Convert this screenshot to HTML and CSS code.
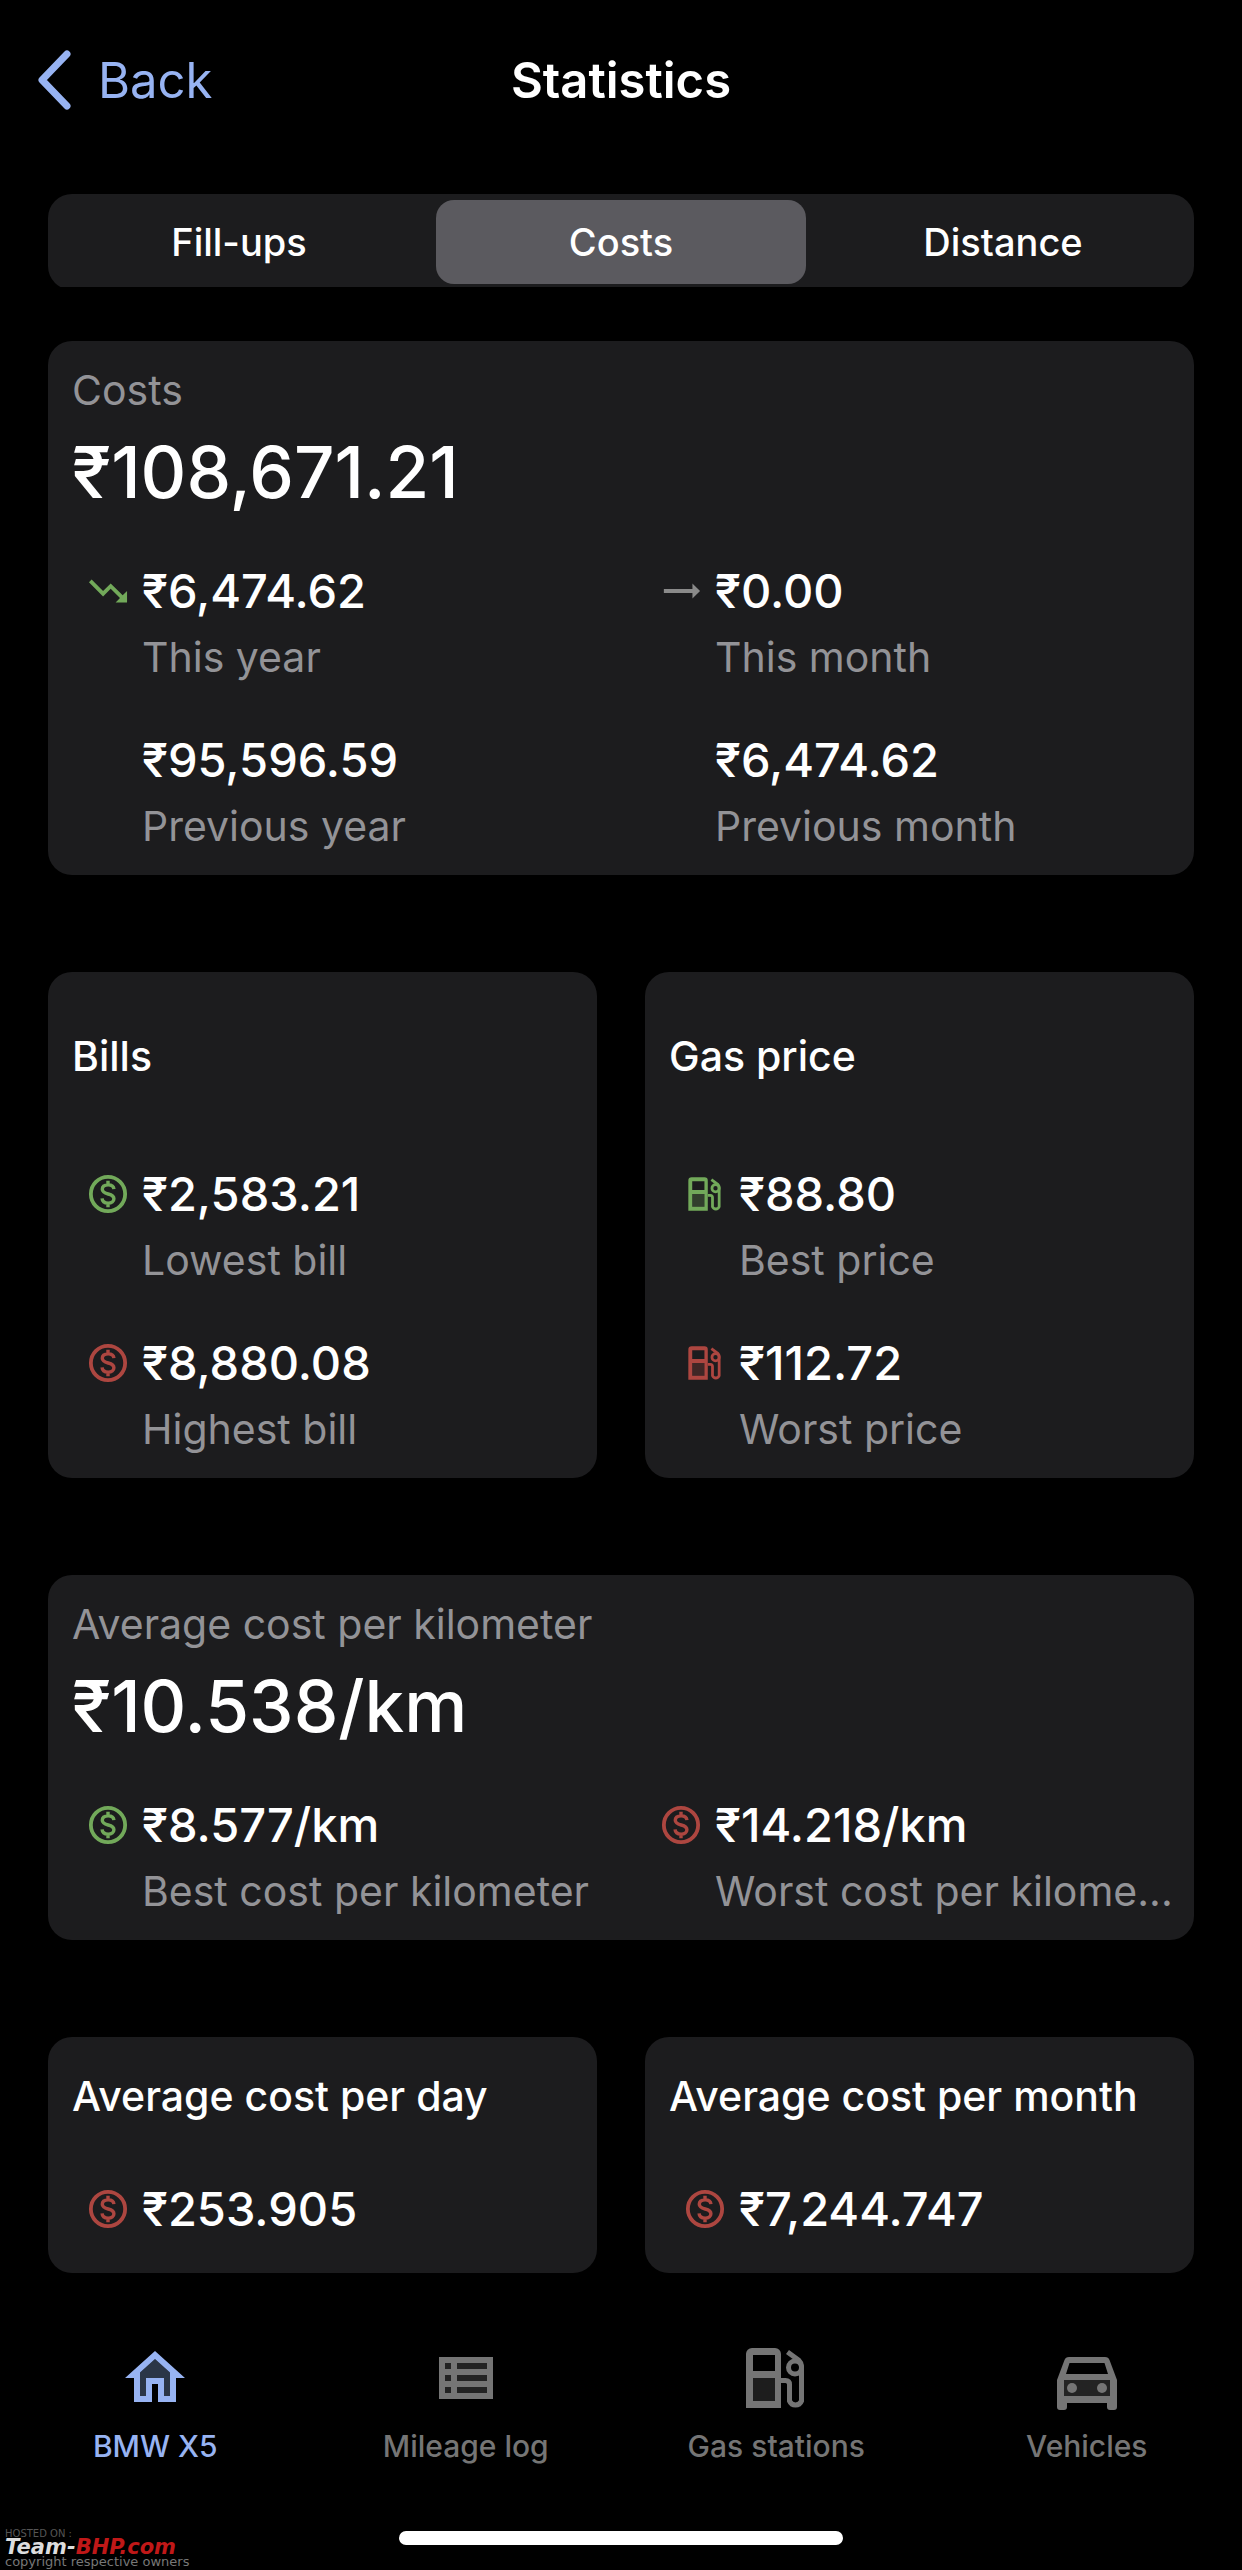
FILE: index.html
```html
<!DOCTYPE html>
<html lang="en">
<head>
    <meta charset="utf-8">
    <meta name="viewport" content="width=device-width, initial-scale=1">
    <title>Statistics</title>
    <link rel="stylesheet" href="styles.css">
</head>
<body>
    <!-- shared icons -->
    <svg class="sprite" aria-hidden="true">
        <symbol id="icon-coin" viewBox="1.5 1.5 21 21">
            <circle cx="12" cy="12" r="9" fill="none" stroke="currentColor" stroke-width="2"/>
            <path d="M15.1 9.5c-.1-1.4-1.2-2.3-3-2.3-1.9 0-3.1.9-3.1 2.3 0 1.5 1.200 2 3.100 2.500 2 .5 3 1.100 3 2.500s-1.200 2.300-3 2.300c-1.900 0-3.100-.9-3.200-2.500M12 5v2.200M12 16.800V19" fill="none" stroke="currentColor" stroke-width="1.800"/>
        </symbol>
        <symbol id="icon-pump" viewBox="0 0 72 72">
            <path d="M13 36h22v23H13z" fill="currentColor" class="tank"/>
            <path fill="currentColor" fill-rule="evenodd" d="M12 6h23a6 6 0 0 1 6 6v54H6V12a6 6 0 0 1 6-6zM13 13v16h22V13zM13 36v23h22V36z"/>
            <path d="M41 38.5h4.5q4 0 4 4V59a6.500 6.500 0 0 0 12 0V24q0-3-2.500-5.500L47.500 10" fill="none" stroke="currentColor" stroke-width="5"/>
            <circle cx="55" cy="25.5" r="6.5" fill="none" stroke="currentColor" stroke-width="5"/>
        </symbol>
        <symbol id="icon-down" viewBox="1.5 1.5 21 21">
            <path fill="currentColor" d="M16 18l2.290-2.290-4.880-4.880-4 4L2 7.410 3.410 6l6 6 4-4 6.300 6.290L22 12v6z"/>
        </symbol>
        <symbol id="icon-flat" viewBox="1.5 1.5 21 21">
            <path fill="currentColor" d="M22 12l-4-4v3H3v2h15v3z"/>
        </symbol>
    </svg>

    <div class="screen">
        <header class="header">
            <button type="button" class="back">
                <svg class="back-icon" viewBox="0 0 36 60" aria-hidden="true"><path d="M31 4L6 30l25 26"/></svg>
                Back
            </button>
            <h1 class="title">Statistics</h1>
        </header>

        <main class="content">
            <div class="segments-clip">
                <div class="segments" role="tablist">
                    <button type="button" class="segment" role="tab" aria-selected="false">Fill-ups</button>
                    <button type="button" class="segment active" role="tab" aria-selected="true">Costs</button>
                    <button type="button" class="segment" role="tab" aria-selected="false">Distance</button>
                </div>
            </div>

            <section class="card">
                <h2 class="caption">Costs</h2>
                <p class="total">₹108,671.21</p>
                <div class="stats two-columns">
                    <div class="stat">
                        <svg class="icon green"><use href="#icon-down"/></svg>
                        <p class="value">₹6,474.62</p>
                        <p class="label">This year</p>
                    </div>
                    <div class="stat">
                        <svg class="icon grey"><use href="#icon-flat"/></svg>
                        <p class="value">₹0.00</p>
                        <p class="label">This month</p>
                    </div>
                    <div class="stat">
                        <p class="value">₹95,596.59</p>
                        <p class="label">Previous year</p>
                    </div>
                    <div class="stat">
                        <p class="value">₹6,474.62</p>
                        <p class="label">Previous month</p>
                    </div>
                </div>
            </section>

            <div class="card-row">
                <section class="card">
                    <h2 class="card-title tall">Bills</h2>
                    <div class="stats">
                        <div class="stat">
                            <svg class="icon green"><use href="#icon-coin"/></svg>
                            <p class="value">₹2,583.21</p>
                            <p class="label">Lowest bill</p>
                        </div>
                        <div class="stat">
                            <svg class="icon red"><use href="#icon-coin"/></svg>
                            <p class="value">₹8,880.08</p>
                            <p class="label">Highest bill</p>
                        </div>
                    </div>
                </section>
                <section class="card">
                    <h2 class="card-title tall">Gas price</h2>
                    <div class="stats">
                        <div class="stat">
                            <svg class="icon green"><use href="#icon-pump"/></svg>
                            <p class="value">₹88.80</p>
                            <p class="label">Best price</p>
                        </div>
                        <div class="stat">
                            <svg class="icon red"><use href="#icon-pump"/></svg>
                            <p class="value">₹112.72</p>
                            <p class="label">Worst price</p>
                        </div>
                    </div>
                </section>
            </div>

            <section class="card">
                <h2 class="caption">Average cost per kilometer</h2>
                <p class="total">₹10.538/km</p>
                <div class="stats two-columns">
                    <div class="stat">
                        <svg class="icon green"><use href="#icon-coin"/></svg>
                        <p class="value">₹8.577/km</p>
                        <p class="label">Best cost per kilometer</p>
                    </div>
                    <div class="stat">
                        <svg class="icon red"><use href="#icon-coin"/></svg>
                        <p class="value">₹14.218/km</p>
                        <p class="label">Worst cost per kilome...</p>
                    </div>
                </div>
            </section>

            <div class="card-row">
                <section class="card short">
                    <h2 class="card-title">Average cost per day</h2>
                    <div class="stat">
                        <svg class="icon red"><use href="#icon-coin"/></svg>
                        <p class="value">₹253.905</p>
                    </div>
                </section>
                <section class="card short">
                    <h2 class="card-title">Average cost per month</h2>
                    <div class="stat">
                        <svg class="icon red"><use href="#icon-coin"/></svg>
                        <p class="value">₹7,244.747</p>
                    </div>
                </section>
            </div>
        </main>

        <nav class="tabs">
            <a href="#" class="tab current">
                <svg class="tab-icon" viewBox="0 0 24 24" aria-hidden="true">
                    <path fill="#2b3647" d="M7 10.190V18h2v-6h6v6h2v-7.810l-5-4.500z"/>
                    <path fill="currentColor" fill-rule="evenodd" d="M12 3L2 12h3v8h6v-6h2v6h6v-8h3zM7 10.190l5-4.500 5 4.500V18h-2v-6H9v6H7z"/>
                </svg>
                BMW X5
            </a>
            <a href="#" class="tab">
                <svg class="tab-icon" viewBox="0 0 24 24" aria-hidden="true">
                    <path fill="currentColor" opacity=".3" d="M4 6h16v12H4z"/>
                    <path fill="currentColor" fill-rule="evenodd" d="M3 5h18v14H3zM5 7v2h2V7zM9 7v2h10V7zM5 11v2h2v-2zM9 11v2h10v-2zM5 15v2h2v-2zM9 15v2h10v-2z"/>
                </svg>
                Mileage log
            </a>
            <a href="#" class="tab">
                <svg class="tab-icon" aria-hidden="true"><use href="#icon-pump"/></svg>
                Gas stations
            </a>
            <a href="#" class="tab">
                <svg class="tab-icon" viewBox="0 0 72 72" aria-hidden="true">
                    <path fill="currentColor" opacity=".3" d="M12 38h48v17H12z"/>
                    <path fill="currentColor" fill-rule="evenodd" d="M18 15h36q3.500 0 4.500 3L66 38v27q0 3-3 3h-4q-3 0-3-3v-4H16v4q0 3-3 3H9q-3 0-3-3V38l7.500-20q1-3 4.500-3zM18.500 21L15 32h42l-3.500-11zM13 38v16h46V38z"/>
                    <circle cx="21" cy="46" r="5" fill="currentColor"/>
                    <circle cx="51" cy="46" r="5" fill="currentColor"/>
                </svg>
                Vehicles
            </a>
        </nav>
        <div class="home-bar"></div>
    </div>

    <div class="watermark">
        <span class="hosted">HOSTED ON :</span>
        <span class="site">Team-<span class="site-red">BHP.com</span></span>
        <span class="owners">copyright respective owners</span>
    </div>
</body>
</html>
```
FILE: styles.css
```css
* {
    box-sizing: border-box;
}

body {
    margin: 0;
    background: #000;
    color: #fff;
    font-family: Inter, "Liberation Sans", sans-serif;
}

h1,
h2,
p {
    margin: 0;
}

button {
    border: none;
    background: none;
    color: inherit;
    font-family: inherit;
}

.sprite {
    display: none;
}

.screen {
    display: flex;
    flex-direction: column;
    min-height: 100vh;
}

/* header */
.header {
    display: grid;
    grid-template-columns: 1fr auto 1fr;
    align-items: center;
    height: 160px;
    padding: 0 36px;
}

.back {
    display: flex;
    align-items: center;
    justify-self: start;
    gap: 26px;
    padding: 0;
    color: #97b3f2;
    font-size: 49px;
}

.back-icon {
    width: 36px;
    height: 60px;
    fill: none;
    stroke: currentColor;
    stroke-width: 7;
    stroke-linecap: round;
    stroke-linejoin: round;
}

.title {
    font-size: 49px;
    font-weight: 600;
}

.content {
    padding: 34px 48px 0;
}

.segments-clip {
    height: 93px;
    margin-bottom: 54px;
    overflow: hidden;
}

.segments {
    display: grid;
    grid-template-columns: 1fr 1fr 1fr;
    height: 96px;
    border-radius: 24px;
    background: #1c1c1e;
}

.segment {
    margin: 6px;
    padding: 0;
    border-radius: 18px;
    font-size: 38px;
    font-weight: 500;
}

.segment.active {
    background: #5b5a5f;
}

/* cards */
.card {
    margin-bottom: 97px;
    padding: 19px 0;
    border-radius: 24px;
    background: #1c1c1e;
}

.card-row {
    display: grid;
    grid-template-columns: 1fr 1fr;
    gap: 48px;
}

.caption,
.label {
    color: #939397;
    font-size: 41px;
    font-weight: 400;
    line-height: 60px;
}

.caption,
.card-title,
.total {
    padding: 0 24px;
}

.total {
    margin-bottom: 31px;
    font-size: 71px;
    font-weight: 500;
    line-height: 104px;
}

.card-title {
    font-size: 41px;
    font-weight: 500;
    line-height: 60px;
}

.card-title.tall {
    padding-top: 35px;
    margin-bottom: 72px;
}

.card.short {
    margin-bottom: 0;
    padding: 29px 0 28px;
}

.short .card-title {
    margin-bottom: 47px;
}

.stats {
    display: grid;
    row-gap: 37px;
}

.two-columns {
    grid-template-columns: 1fr 1fr;
}

.stat {
    display: grid;
    grid-template-columns: 40px minmax(0, 1fr);
    column-gap: 14px;
    align-items: center;
    min-width: 0;
    padding: 0 16px 0 40px;
}

.icon {
    width: 40px;
    height: 40px;
}

.green {
    color: #72a95a;
}

.red {
    color: #ad4640;
}

.grey {
    color: #8a8a8a;
}

.tank {
    opacity: 0.25;
}

.value,
.label {
    grid-column: 2;
    overflow: hidden;
    text-overflow: ellipsis;
    white-space: nowrap;
}

.value {
    font-size: 47px;
    font-weight: 500;
    line-height: 72px;
}

/* bottom tabs */
.tabs {
    display: grid;
    grid-template-columns: repeat(4, 1fr);
    margin-top: auto;
    padding-top: 69px;
}

.tab {
    display: flex;
    flex-direction: column;
    align-items: center;
    gap: 12px;
    color: #757575;
    font-size: 30px;
    font-weight: 500;
    line-height: 40px;
    text-decoration: none;
}

.tab.current {
    color: #97b3f2;
}

.tab-icon {
    width: 72px;
    height: 72px;
}

.home-bar {
    width: 444px;
    height: 14px;
    margin: 65px auto 25px;
    border-radius: 7px;
    background: #fff;
}

.watermark {
    position: absolute;
    bottom: 2px;
    left: 5px;
    display: flex;
    flex-direction: column;
    font-family: "DejaVu Sans", sans-serif;
    white-space: nowrap;
}

.hosted {
    color: #555;
    font-size: 10px;
    line-height: 10px;
}

.site {
    color: #ddd;
    font-size: 21px;
    font-style: italic;
    font-weight: bold;
    line-height: 16px;
}

.site-red {
    color: #c01818;
}

.owners {
    color: #777;
    font-size: 13px;
    line-height: 13px;
}
```
